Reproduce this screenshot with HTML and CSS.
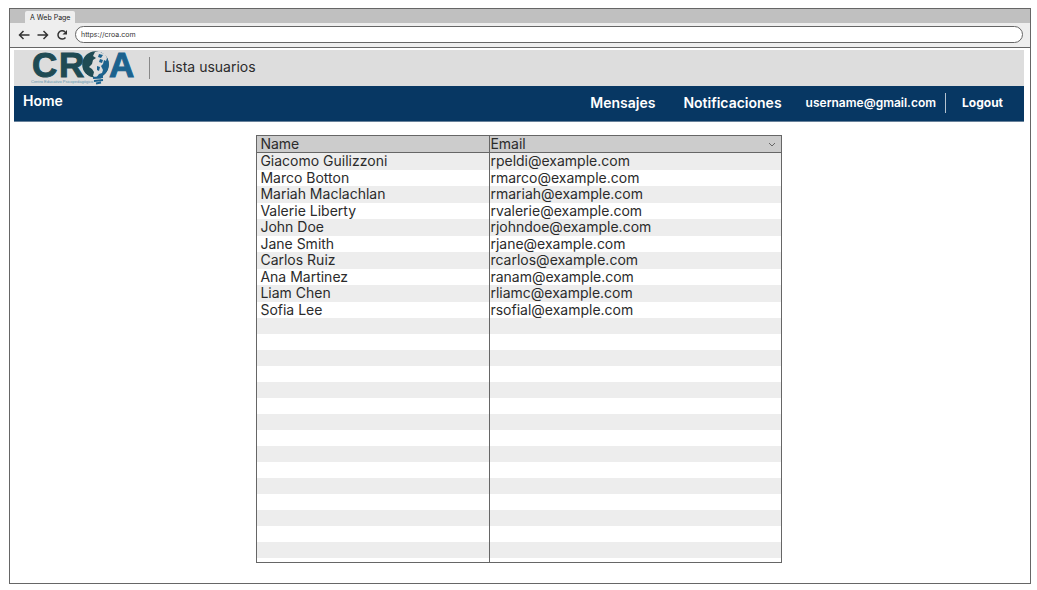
FILE: index.html
```html
<!DOCTYPE html>
<html lang="es">
<head>
<meta charset="utf-8">
<title>Lista usuarios</title>
<link rel="stylesheet" href="styles.css">
</head>
<body>
<div class="window">
  <div class="tabs"><span class="tab">A Web Page</span></div>
  <div class="toolbar">
    <button class="tool" type="button" aria-label="Back"><svg viewBox="0 0 12 12"><path d="M11.500 6H1.500M5.500 2L1.500 6l4 4"/></svg></button>
    <button class="tool" type="button" aria-label="Forward"><svg viewBox="0 0 12 12"><path d="M.5 6h10M6.500 2l4 4l-4 4"/></svg></button>
    <button class="tool" type="button" aria-label="Reload"><svg viewBox="0 0 12 12"><path d="M9 2.800A4.200 4.200 0 1 0 9.500 8.500"/><path class="solid" d="M11 1v4.500H6.500z"/></svg></button>
    <input class="address" type="text" aria-label="Address" value="https://croa.com">
  </div>
  <div class="page">
    <header class="brand">
      <svg class="logo" viewBox="0 0 104 36" role="img" aria-label="CROA">
        <g class="letters">
          <text class="teal" x="1" y="27">C</text>
          <text class="teal" x="28" y="27">R</text>
          <text class="blue" x="78" y="27">A</text>
        </g>
        <circle class="fill-teal" cx="64.500" cy="14.500" r="13.300"/>
        <path class="fill-blue" d="M66 1.300a13.300 13.300 0 0 1 6 24.300l-2 2.900h-7l-1-3 7-7z"/>
        <path class="land" d="M64 2l4-1 3 2 3 1 2 4-1 3-2-1-1 4-2 2 2 4-1 3-3 1-3 4-3-2 1-4-2-3-3-2 3-3 1-4 3-2-3-2z"/>
        <path class="fill-blue" d="M68 4l4 1-2 3-3-1zM69 9l3 1-1 3-3-1zM66 16l3 1-1 4-2-1z"/>
        <path class="shine" d="M54 24q5 4 9 4"/>
        <path class="base" d="M62 28l10-1M63 31l9-1M65 33.500l5-1"/>
        <text class="motto" x="0" y="33">Centro Educativo Psicopedagógico</text>
      </svg>
      <h1 class="title">Lista usuarios</h1>
    </header>
    <nav class="nav">
      <a class="home" href="#">Home</a>
      <a href="#">Mensajes</a>
      <a href="#">Notificaciones</a>
      <a class="small" href="#">username@gmail.com</a>
      <a class="small logout" href="#">Logout</a>
    </nav>
    <table class="users">
      <thead>
        <tr><th scope="col">Name</th><th scope="col"><span class="sortable">Email <button class="sort" type="button" aria-label="Sort"><svg viewBox="0 0 8 6"><path d="M1 1l3 3 3-3"/></svg></button></span></th></tr>
      </thead>
      <tbody class="filled">
        <tr><td>Giacomo Guilizzoni</td><td>rpeldi@example.com</td></tr>
        <tr><td>Marco Botton</td><td>rmarco@example.com</td></tr>
        <tr><td>Mariah Maclachlan</td><td>rmariah@example.com</td></tr>
        <tr><td>Valerie Liberty</td><td>rvalerie@example.com</td></tr>
        <tr><td>John Doe</td><td>rjohndoe@example.com</td></tr>
        <tr><td>Jane Smith</td><td>rjane@example.com</td></tr>
        <tr><td>Carlos Ruiz</td><td>rcarlos@example.com</td></tr>
        <tr><td>Ana Martinez</td><td>ranam@example.com</td></tr>
        <tr><td>Liam Chen</td><td>rliamc@example.com</td></tr>
        <tr><td>Sofia Lee</td><td>rsofial@example.com</td></tr>
      </tbody>
      <tbody class="empty">
        <tr><td></td><td></td></tr>
        <tr><td></td><td></td></tr>
        <tr><td></td><td></td></tr>
        <tr><td></td><td></td></tr>
        <tr><td></td><td></td></tr>
        <tr><td></td><td></td></tr>
        <tr><td></td><td></td></tr>
        <tr><td></td><td></td></tr>
        <tr><td></td><td></td></tr>
        <tr><td></td><td></td></tr>
        <tr><td></td><td></td></tr>
        <tr><td></td><td></td></tr>
        <tr><td></td><td></td></tr>
        <tr><td></td><td></td></tr>
        <tr><td></td><td></td></tr>
      </tbody>
      <tfoot>
        <tr><td></td><td></td></tr>
      </tfoot>
    </table>
  </div>
</div>
</body>
</html>
```
FILE: styles.css
```css
* { box-sizing: border-box; }
body { margin: 0; padding: 8px 6px 6px 9px; background: #fff; color: #2b2b2b; font-family: Inter, "Open Sans", sans-serif; font-size: 14px; }
.window { border: 1px solid #666; }
.tabs { display: flex; padding: 2px 15px 0; background: #c0c0c0; }
.tab { padding: 1px 5px 0; border-radius: 2px 2px 0 0; background: #eee; color: #222; font-size: 7px; line-height: 11px; }
.toolbar { display: flex; align-items: center; gap: 7px; padding: 3px 7px 4px 8px; background: #eee; border-bottom: 1px solid #666; }
.tool { display: flex; padding: 0; border: 0; background: none; }
.tool svg { width: 12px; height: 12px; fill: none; stroke: #333; stroke-width: 1.5; }
.tool .solid { fill: #333; stroke: none; }
.address { flex: 1; min-width: 0; height: 17px; padding: 0 5px; border: 1px solid #666; border-radius: 9px; background: #fff; color: #333; font: 7px Inter, sans-serif; }
.page { padding: 2px 6px 20px 4px; }
.brand { display: flex; align-items: center; padding-left: 17px; background: #ddd; }
.logo { display: block; width: 104px; height: 36px; margin-right: 14px; }
.letters { font: bold 35px "Liberation Sans", Arial, sans-serif; stroke-width: 1; }
.teal { fill: #1f4b54; stroke: #1f4b54; }
.blue { fill: #1b628e; stroke: #1b628e; }
.fill-teal { fill: #1f4b54; }
.fill-blue { fill: #1b628e; }
.land { fill: #ddd; }
.shine { fill: none; stroke: #ddd; }
.base { fill: none; stroke: #1b628e; stroke-width: 2; }
.motto { fill: #5e94ad; font: 4px "Liberation Sans", Arial, sans-serif; }
.title { margin: 0; padding: 0 0 3px 14px; border-left: 1px solid #888; font-size: 14px; font-weight: 400; line-height: 19px; }
.nav { display: flex; align-items: center; min-height: 36px; padding: 0 21px 2px 9px; background: #073763; border-bottom: 1px solid #68819a; }
.nav a { margin-left: 28px; color: #fff; font-weight: 600; text-decoration: none; }
.nav .home { margin: 0 auto 4px 0; }
.nav .small { margin-left: 24px; font-size: 12px; line-height: 20px; }
.nav .logout { margin-left: 9px; padding-left: 16px; border-left: 1px solid #b5c3d0; font-weight: 700; }
.users { width: 52%; margin: 13px auto 0; border: 1px solid #666; border-spacing: 0; table-layout: fixed; }
.users th, .users td { padding: 0 3px; text-align: left; vertical-align: top; font-weight: 400; line-height: 15px; white-space: nowrap; }
.users th { height: 17px; background: #ccc; border-bottom: 1px solid #666; }
.users th:first-child { width: 232px; }
.users tr > :last-child { padding-left: 0; border-left: 1px solid #666; }
.users tbody tr { height: 16px; }
.users tfoot tr { height: 4px; }
.filled tr:nth-child(odd) td { height: 17px; }
.users tbody tr:nth-child(odd) { background: #ededed; }
.sortable { display: flex; align-items: center; justify-content: space-between; }
.sort { display: flex; padding: 2px 2px 0; border: 0; background: none; }
.sort svg { width: 8px; height: 6px; fill: none; stroke: #666; }
```
